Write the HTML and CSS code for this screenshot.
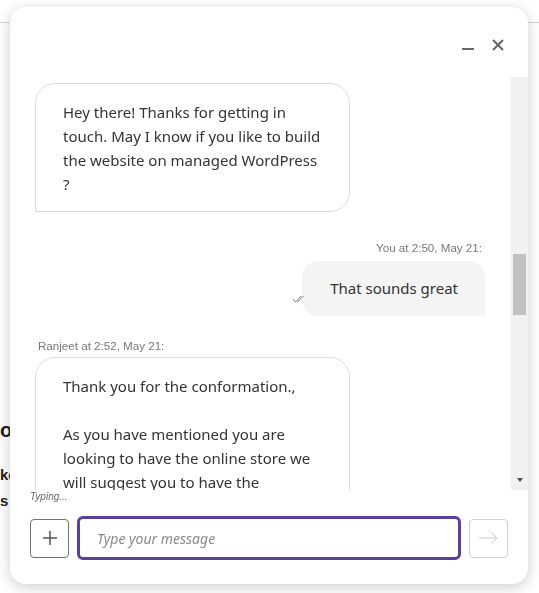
FILE: index.html
```html
<!DOCTYPE html>
<html lang="en">
<head>
    <meta charset="UTF-8">
    <meta name="viewport" content="width=device-width, initial-scale=1.0">
    <title>Chat</title>
    <link rel="stylesheet" href="styles.css">
</head>
<body>
    <div class="page">
        <div class="page-top"></div>
        <h2 class="page-title">on</h2>
        <p class="page-line">ke</p>
        <p class="page-line">s</p>
    </div>

    <div class="chat">
        <div class="chat-header">
            <button class="icon-btn" title="Minimize">
                <svg width="12" height="12" viewBox="0 0 12 12"><line x1="0" y1="10" x2="12" y2="10" stroke="#666" stroke-width="2"/></svg>
            </button>
            <button class="icon-btn" title="Close">
                <svg width="12" height="12" viewBox="0 0 12 12"><path d="M1 1 L11 11 M11 1 L1 11" stroke="#666" stroke-width="2" fill="none"/></svg>
            </button>
        </div>

        <div class="chat-body">
            <div class="messages">
                <div class="bubble bubble-in">
                    Hey there! Thanks for getting in touch. May I know if you like to build the website on managed WordPress ?
                </div>

                <div class="meta meta-out">You at 2:50, May 21:</div>
                <div class="row-out">
                    <div class="bubble bubble-out">
                        That sounds great
                        <svg class="ticks" width="14" height="8" viewBox="0 0 14 8">
                            <path d="M1 4 L3.5 7 L9 1 M5.5 7 L11.5 1" stroke="#777" stroke-width="1" fill="none"/>
                        </svg>
                    </div>
                </div>

                <div class="meta">Ranjeet at 2:52, May 21:</div>
                <div class="bubble bubble-in">
                    Thank you for the conformation.,<br><br>As you have mentioned you are looking to have the online store we will suggest you to have the WooCommerce hosting plan with the managed WordPress.
                </div>
            </div>
            <div class="scrollbar">
                <div class="scroll-thumb"></div>
                <div class="scroll-down"></div>
            </div>
        </div>

        <div class="typing">Typing...</div>

        <form class="composer">
            <button type="button" class="attach-btn" title="Attach">
                <svg width="14" height="14" viewBox="0 0 14 14"><path d="M7 0 V14 M0 7 H14" stroke="#555" stroke-width="1.5" fill="none"/></svg>
            </button>
            <input type="text" class="message-input" placeholder="Type your message">
            <button type="submit" class="send-btn" title="Send">
                <svg width="19" height="12" viewBox="0 0 19 12"><path d="M0 6 H18 M12.5 0.5 L18 6 L12.5 11.5" stroke="#c8c8c8" stroke-width="1" fill="none"/></svg>
            </button>
        </form>
    </div>
</body>
</html>
```
FILE: styles.css
```css
* {
    box-sizing: border-box;
}

body {
    margin: 0;
    font-family: "Liberation Sans", Arial, sans-serif;
    background-color: #fff;
    color: #222;
}

/* page behind the chat window */
.page {
    height: 593px;
    overflow: hidden;
}

.page-top {
    height: 23px;
    border-bottom: 1px solid #d4d4d4;
}

.page-title {
    margin: 394px 0 0;
    font-size: 20px;
    line-height: 26px;
    font-weight: bold;
}

.page-line {
    margin: 0;
    font-size: 15px;
    line-height: 26px;
    font-weight: bold;
}

.page-title + .page-line {
    margin-top: 19px;
}

/* chat window */
.chat {
    position: fixed;
    top: 7px;
    left: 10px;
    width: 518px;
    height: 577px;
    background-color: #fff;
    border-radius: 16px;
    box-shadow: 0 3px 14px rgba(0, 0, 0, 0.2);
    overflow: hidden;
    display: flex;
    flex-direction: column;
}

.chat-header {
    height: 70px;
    flex-shrink: 0;
    display: flex;
    justify-content: flex-end;
    align-items: flex-start;
    gap: 18px;
    padding: 32px 24px 0 0;
}

.icon-btn {
    width: 12px;
    height: 12px;
    padding: 0;
    border: none;
    background: none;
    cursor: pointer;
}

.icon-btn svg {
    display: block;
}

.chat-body {
    height: 413px;
    flex-shrink: 0;
    display: flex;
}

.messages {
    flex: 1;
    overflow: hidden;
    padding-top: 6px;
}

.scrollbar {
    width: 17px;
    background-color: #f1f1f1;
    display: flex;
    flex-direction: column;
    align-items: center;
}

.scroll-thumb {
    width: 13px;
    height: 61px;
    margin-top: 177px;
    background-color: #c1c1c1;
}

.scroll-down {
    margin-top: auto;
    margin-bottom: 8px;
    width: 0;
    height: 0;
    border-left: 3px solid transparent;
    border-right: 3px solid transparent;
    border-top: 4px solid #505050;
}

.bubble {
    font-family: "Noto Sans", sans-serif;
    font-size: 15px;
    line-height: 24px;
    color: #333;
}

.bubble-in {
    width: 315px;
    margin-left: 25px;
    padding: 16px 25px 15px 27px;
    border: 1px solid #d7dde3;
    border-radius: 20px 20px 20px 0;
}

.meta {
    font-size: 11.6px;
    line-height: 14px;
    color: #777;
    margin: 23px 0 4px;
    padding-left: 28px;
}

.meta-out {
    margin: 29px 0 6px;
    padding: 0 29px 0 0;
    text-align: right;
}

.row-out {
    display: flex;
    justify-content: flex-end;
    padding-right: 26px;
}

.bubble-out {
    position: relative;
    padding: 15px 27px 16px 28px;
    background-color: #f4f4f4;
    border-radius: 16px 16px 0 16px;
}

.ticks {
    position: absolute;
    left: -10px;
    bottom: 13px;
}

.typing {
    height: 26px;
    flex-shrink: 0;
    padding-left: 20px;
    font-size: 10px;
    font-style: italic;
    line-height: 14px;
    color: #666;
}

.composer {
    display: flex;
    align-items: center;
    gap: 8px;
    padding: 0 20px;
    height: 44px;
    flex-shrink: 0;
}

.attach-btn,
.send-btn {
    width: 39px;
    height: 39px;
    padding: 0;
    background-color: #fff;
    border-radius: 4px;
    display: flex;
    align-items: center;
    justify-content: center;
    cursor: pointer;
}

.attach-btn {
    border: 1px solid #717171;
}

.send-btn {
    border: 1px solid #d0d0d0;
}

.message-input {
    flex: 1;
    height: 44px;
    padding: 0 17px;
    border: 3px solid #5c3e9c;
    border-radius: 6px;
    font-family: "Noto Sans", sans-serif;
    font-size: 14px;
    color: #333;
    outline: none;
}

.message-input::placeholder {
    font-style: italic;
    color: #8a8a8a;
}
```
